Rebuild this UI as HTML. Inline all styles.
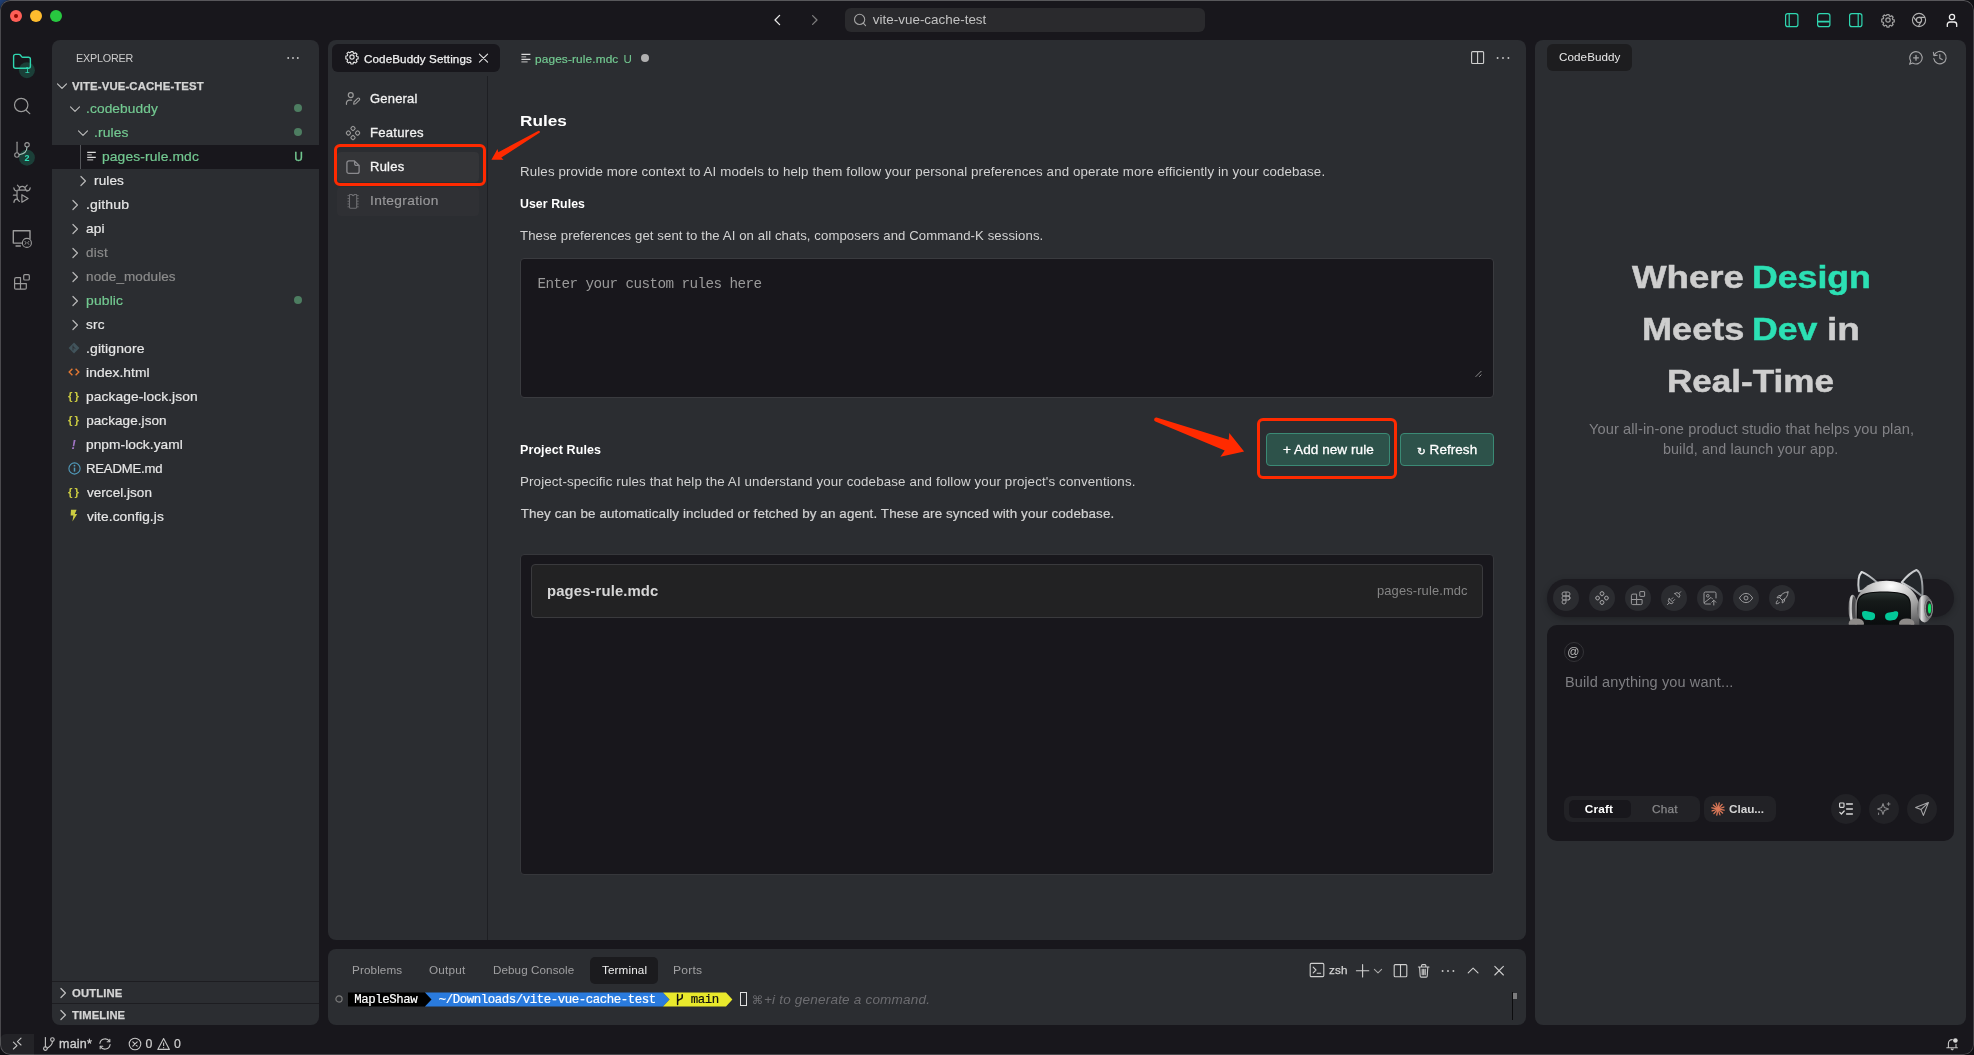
<!DOCTYPE html>
<html lang="en"><head><meta charset="utf-8"><title>CodeBuddy Settings - vite-vue-cache-test</title>
<style>
html,body{margin:0;padding:0;background:#101014;}
body{width:1974px;height:1055px;overflow:hidden;position:relative;font-family:'Liberation Sans',sans-serif;}
.a{position:absolute;box-sizing:border-box;}
.t{white-space:pre;transform-origin:0 50%;}
svg{overflow:visible;}
</style></head><body>
<div class="a" style="left:0;top:0;width:12px;height:12px;background:linear-gradient(135deg,#1f3f76 0,#16294a 60%,#101014 100%);"></div>
<div class="a" style="left:0;top:0;width:1974px;height:1055px;background:#18171c;border-radius:10px;overflow:hidden;will-change:transform;">
<div class="a" style="left:0px;top:0px;width:1974px;height:1055px;border-radius:10px;border:1px solid rgba(255,255,255,0.28);border-left-color:rgba(255,255,255,0.22);border-right-color:rgba(255,255,255,0.18);border-bottom-color:rgba(255,255,255,0.22);z-index:50;pointer-events:none;"></div>
<div class="a" style="left:10px;top:10px;width:12px;height:12px;background:#fe5f57;border-radius:6px;"></div>
<div class="a" style="left:30px;top:10px;width:12px;height:12px;background:#febc2e;border-radius:6px;"></div>
<div class="a" style="left:50px;top:10px;width:12px;height:12px;background:#28c840;border-radius:6px;"></div>
<div class="a" style="left:14px;top:14px;width:4px;height:4px;background:#8c0a00;border-radius:2px;"></div>
<svg class="a" style="left:769px;top:12px;" width="16" height="16" viewBox="0 0 16 16" fill="none"><path d="M10.6 3.4 L6 8 L10.6 12.6" stroke="#e8e8e8" stroke-width="1.3" stroke-linecap="round" stroke-linejoin="round"/></svg>
<svg class="a" style="left:807px;top:12px;" width="16" height="16" viewBox="0 0 16 16" fill="none"><path d="M5.6 3.6 L10 8 L5.6 12.4" stroke="#7d7d7d" stroke-width="1.3" stroke-linecap="round" stroke-linejoin="round"/></svg>
<div class="a" style="left:845px;top:8px;width:360px;height:24px;background:#2a2a2d;border-radius:6px;"></div>
<svg class="a" style="left:852px;top:12px;" width="16" height="16" viewBox="0 0 16 16" fill="none"><circle cx="7.6" cy="7.4" r="5.1" stroke="#a4a4a4" stroke-width="1.1"/><path d="M11.3 11.2 L13.6 13.6" stroke="#a4a4a4" stroke-width="1.1" stroke-linecap="round"/></svg>
<span class="a t" style="left:872.87px;top:11.00px;line-height:17px;font-size:13.4px;color:#c2c2c2;letter-spacing:0.017px;">vite-vue-cache-test</span>
<svg class="a" style="left:1785px;top:13px;" width="14" height="15" viewBox="0 0 14 15" fill="none"><rect x="0.6" y="0.6" width="12.3" height="13" rx="2.2" stroke="#2fd6b0" stroke-width="1.2"/><path d="M4.2 0.8 V13.4" stroke="#2fd6b0" stroke-width="1.2"/></svg>
<svg class="a" style="left:1817px;top:13px;" width="14" height="15" viewBox="0 0 14 15" fill="none"><rect x="0.6" y="0.6" width="12.3" height="13" rx="2.2" stroke="#2fd6b0" stroke-width="1.2"/><path d="M0.8 8.6 H12.8" stroke="#2fd6b0" stroke-width="1.6"/></svg>
<svg class="a" style="left:1849px;top:13px;" width="14" height="15" viewBox="0 0 14 15" fill="none"><rect x="0.6" y="0.6" width="12.3" height="13" rx="2.2" stroke="#2fd6b0" stroke-width="1.2"/><path d="M9.2 0.8 V13.4" stroke="#2fd6b0" stroke-width="1.2"/></svg>
<svg class="a" style="left:1877.7px;top:9.8px;" width="20" height="20" viewBox="0 0 20 20" fill="none"><path d="M8 5.3a2.7 2.7 0 1 0 0 5.4a2.7 2.7 0 0 0 0-5.4zM6.7 1.2h2.6l.4 1.9 1.2.6 1.7-1 1.8 1.8-1 1.7.5 1.2 1.9.4v2.6l-1.9.4-.5 1.2 1 1.7-1.8 1.8-1.7-1-1.2.5-.4 1.9H6.7l-.4-1.9-1.2-.5-1.7 1-1.8-1.8 1-1.7-.5-1.2-1.9-.4V6.8l1.9-.4.5-1.2-1-1.7 1.8-1.8 1.7 1 1.2-.6z" stroke="#a0a0a0" stroke-width="1.56" stroke-linejoin="round" transform="translate(10,10) scale(0.801) translate(-8,-8)"/></svg>
<svg class="a" style="left:1911px;top:12px;" width="16" height="16" viewBox="0 0 16 16" fill="none"><circle cx="8" cy="8" r="6.6" stroke="#b0b0b0" stroke-width="1.1"/><circle cx="8" cy="8" r="2.6" stroke="#b0b0b0" stroke-width="1.1"/><path d="M2.3 4.8 L5.8 9.4 M8 5.4 H14 M10.2 9.4 L7.4 14.4" stroke="#b0b0b0" stroke-width="1.1"/></svg>
<svg class="a" style="left:1944px;top:12px;" width="16" height="16" viewBox="0 0 16 16" fill="none"><circle cx="8" cy="5" r="2.6" stroke="#f0f0f0" stroke-width="1.3"/><path d="M3.3 14.4 V12.6 a2.6 2.6 0 0 1 2.6-2.6 h4.2 a2.6 2.6 0 0 1 2.6 2.6 V14.4" stroke="#f0f0f0" stroke-width="1.3" stroke-linecap="round"/></svg>
<svg class="a" style="left:0px;top:40px;" width="52" height="260" viewBox="0 0 52 260" fill="none"><g transform="translate(0,-40)" fill="none" stroke-linecap="round" stroke-linejoin="round">
<circle cx="26.9" cy="70.2" r="8" fill="#1b3f38"/>
<path d="M15.6 54.4 h3.4 a1.6 1.6 0 0 1 1.3 0.6 l1.5 1.9 a1 1 0 0 0 0.8 0.4 h5.8 a2 2 0 0 1 2 2 v7 a2 2 0 0 1 -2 2 h-12.8 a2 2 0 0 1 -2 -2 v-9.9 a2 2 0 0 1 2 -2 z" stroke="#2fd6b0" stroke-width="1.4"/>
<circle cx="21.2" cy="105" r="6.7" stroke="#9a9a9a" stroke-width="1.2"/><path d="M26.1 110.2 L29.8 113.6" stroke="#9a9a9a" stroke-width="1.2"/>
<circle cx="26.9" cy="157.7" r="8" fill="#1b3f38"/>
<path d="M17.05 142.2 V152.2" stroke="#9a9a9a" stroke-width="1.2"/>
<circle cx="27.05" cy="144.8" r="2.2" stroke="#9a9a9a" stroke-width="1.1"/>
<circle cx="16.9" cy="155" r="2.2" stroke="#9a9a9a" stroke-width="1.1"/>
<path d="M27 147.1 C27 151.6 23.4 154.2 19.2 154.8" stroke="#a8c4bc" stroke-width="1.1"/>
<path d="M19.2 189.4 a3.1 3.1 0 0 1 6.2 0 M17.8 190.2 h9 M17.4 185.2 l2 2.2 M27.2 185.2 l-2 2.2 M13.8 187.8 c0.1 2 1.2 3.1 3.4 3.3 M30.2 187.8 c-0.1 2 -1.2 3.1 -3.4 3.3 M13.4 195.2 h3.6 M13.9 202.4 c0.1 -2 1.2 -3.1 3.2 -3.5 M17 191.2 v5.6 c0 2 0.9 3.6 2.4 4.6" stroke="#9a9a9a" stroke-width="1.2"/>
<path d="M21.9 194.7 L28.1 198.5 L21.9 202.3 Z" stroke="#9a9a9a" stroke-width="1.2"/>
<path d="M21.6 243.1 H13.3 V230.8 H30 V238.4" stroke="#9a9a9a" stroke-width="1.4"/>
<path d="M16 246 H20.4" stroke="#9a9a9a" stroke-width="1.3"/>
<circle cx="26.9" cy="242.9" r="4.5" stroke="#9a9a9a" stroke-width="1.1"/>
<path d="M25 241.4 l1.2 1.5 l-1.2 1.5 M28.8 241.4 l-1.2 1.5 l1.2 1.5" stroke="#9a9a9a" stroke-width="0.9"/>
<path d="M14.6 279.4 a1.7 1.7 0 0 1 1.7 -1.7 h4.2 v5.9 h5.8 v4.3 a1.2 1.2 0 0 1 -1.2 1.2 h-9.3 a1.2 1.2 0 0 1 -1.2 -1.2 z M20.5 283.6 v5.4 M14.6 283.6 h5.9" stroke="#9a9a9a" stroke-width="1.2"/>
<rect x="23.7" y="274.7" width="5.6" height="5.3" rx="1" stroke="#9a9a9a" stroke-width="1.2"/>
</g></svg>
<span class="a t" style="left:24.40px;top:152.00px;line-height:12px;font-size:9px;color:#2fe0b8;font-weight:700;">2</span>
<span class="a t" style="left:24.74px;top:64.00px;line-height:12px;font-size:9px;color:#2fd6b0;">1</span>
<div class="a" style="left:52px;top:40px;width:267px;height:985px;background:#2b2d31;border-radius:8px;"></div>
<span class="a t" style="left:75.77px;top:51.00px;line-height:15px;font-size:11.2px;color:#cccccc;letter-spacing:-0.186px;transform:scaleX(0.9618);">EXPLORER</span>
<svg class="a" style="left:286px;top:54px;" width="14" height="8" viewBox="0 0 14 8" fill="none"><circle cx="2.2" cy="4" r="0.95" fill="#c8c8c8"/><circle cx="7" cy="4" r="0.95" fill="#c8c8c8"/><circle cx="11.8" cy="4" r="0.95" fill="#c8c8c8"/></svg>
<svg class="a" style="left:54px;top:78px;" width="16" height="16" viewBox="0 0 16 16" fill="none"><path d="M3.5 5.95 L8 10.45 L12.5 5.95" stroke="#c0c0c0" stroke-width="1.2" stroke-linecap="round" stroke-linejoin="round"/></svg>
<span class="a t" style="left:72.18px;top:79.00px;line-height:15px;font-size:11.2px;color:#d4d4d4;font-weight:700;letter-spacing:0.114px;transform:scaleX(1.0175);-webkit-text-stroke:0.25px #d4d4d4;">VITE-VUE-CACHE-TEST</span>
<div class="a" style="left:52px;top:145px;width:267px;height:24px;background:#18171c;"></div>
<div class="a" style="left:80px;top:145px;width:1px;height:24px;background:#55565a;"></div>
<span class="a t" style="left:85.61px;top:100.00px;line-height:18px;font-size:13.5px;color:#73c991;letter-spacing:0.104px;transform:scaleX(1.0168);-webkit-text-stroke:0.2px #73c991;">.codebuddy</span>
<svg class="a" style="left:66.5px;top:100.5px;" width="16" height="16" viewBox="0 0 16 16" fill="none"><path d="M3.5 5.95 L8 10.45 L12.5 5.95" stroke="#b8b8b8" stroke-width="1.2" stroke-linecap="round" stroke-linejoin="round"/></svg>
<span class="a t" style="left:93.60px;top:124.00px;line-height:18px;font-size:13.5px;color:#73c991;letter-spacing:0.098px;transform:scaleX(1.0283);-webkit-text-stroke:0.2px #73c991;">.rules</span>
<svg class="a" style="left:74.5px;top:124.5px;" width="16" height="16" viewBox="0 0 16 16" fill="none"><path d="M3.5 5.95 L8 10.45 L12.5 5.95" stroke="#b8b8b8" stroke-width="1.2" stroke-linecap="round" stroke-linejoin="round"/></svg>
<span class="a t" style="left:101.87px;top:148.00px;line-height:18px;font-size:13.5px;color:#73c991;letter-spacing:0.115px;transform:scaleX(1.0240);-webkit-text-stroke:0.2px #73c991;">pages-rule.mdc</span>
<svg class="a" style="left:87.3px;top:151.1px;" width="10" height="12" viewBox="0 0 10 12" fill="none"><path d="M0.2 1.3 H8.8 M0.2 6.4 H8.8" stroke="#dcdcdc" stroke-width="1.25"/><path d="M0.2 3.85 H4.8 M0.2 8.95 H6.2" stroke="#a4a4a4" stroke-width="1.25"/></svg>
<span class="a t" style="left:94.06px;top:172.00px;line-height:18px;font-size:13.5px;color:#e6e6e6;letter-spacing:0.118px;transform:scaleX(1.0038);-webkit-text-stroke:0.2px #e6e6e6;">rules</span>
<svg class="a" style="left:74.5px;top:172.5px;" width="16" height="16" viewBox="0 0 16 16" fill="none"><path d="M5.95 3.5 L10.45 8 L5.95 12.5" stroke="#b8b8b8" stroke-width="1.2" stroke-linecap="round" stroke-linejoin="round"/></svg>
<span class="a t" style="left:85.59px;top:196.00px;line-height:18px;font-size:13.5px;color:#e6e6e6;letter-spacing:0.141px;transform:scaleX(1.0402);-webkit-text-stroke:0.2px #e6e6e6;">.github</span>
<svg class="a" style="left:66.5px;top:196.5px;" width="16" height="16" viewBox="0 0 16 16" fill="none"><path d="M5.95 3.5 L10.45 8 L5.95 12.5" stroke="#b8b8b8" stroke-width="1.2" stroke-linecap="round" stroke-linejoin="round"/></svg>
<span class="a t" style="left:86.32px;top:220.00px;line-height:18px;font-size:13.5px;color:#e6e6e6;letter-spacing:0.208px;transform:scaleX(1.0111);-webkit-text-stroke:0.2px #e6e6e6;">api</span>
<svg class="a" style="left:66.5px;top:220.5px;" width="16" height="16" viewBox="0 0 16 16" fill="none"><path d="M5.95 3.5 L10.45 8 L5.95 12.5" stroke="#b8b8b8" stroke-width="1.2" stroke-linecap="round" stroke-linejoin="round"/></svg>
<span class="a t" style="left:86.36px;top:244.00px;line-height:18px;font-size:13.5px;color:#8b8b8b;letter-spacing:0.244px;transform:scaleX(0.9959);-webkit-text-stroke:0.2px #8b8b8b;">dist</span>
<svg class="a" style="left:66.5px;top:244.5px;" width="16" height="16" viewBox="0 0 16 16" fill="none"><path d="M5.95 3.5 L10.45 8 L5.95 12.5" stroke="#b8b8b8" stroke-width="1.2" stroke-linecap="round" stroke-linejoin="round"/></svg>
<span class="a t" style="left:86.05px;top:268.00px;line-height:18px;font-size:13.5px;color:#8b8b8b;letter-spacing:0.088px;-webkit-text-stroke:0.2px #8b8b8b;">node_modules</span>
<svg class="a" style="left:66.5px;top:268.5px;" width="16" height="16" viewBox="0 0 16 16" fill="none"><path d="M5.95 3.5 L10.45 8 L5.95 12.5" stroke="#b8b8b8" stroke-width="1.2" stroke-linecap="round" stroke-linejoin="round"/></svg>
<span class="a t" style="left:86.06px;top:292.00px;line-height:18px;font-size:13.5px;color:#73c991;letter-spacing:0.159px;transform:scaleX(1.0272);-webkit-text-stroke:0.2px #73c991;">public</span>
<svg class="a" style="left:66.5px;top:292.5px;" width="16" height="16" viewBox="0 0 16 16" fill="none"><path d="M5.95 3.5 L10.45 8 L5.95 12.5" stroke="#b8b8b8" stroke-width="1.2" stroke-linecap="round" stroke-linejoin="round"/></svg>
<span class="a t" style="left:86.38px;top:316.00px;line-height:18px;font-size:13.5px;color:#e6e6e6;letter-spacing:0.273px;transform:scaleX(1.0026);-webkit-text-stroke:0.2px #e6e6e6;">src</span>
<svg class="a" style="left:66.5px;top:316.5px;" width="16" height="16" viewBox="0 0 16 16" fill="none"><path d="M5.95 3.5 L10.45 8 L5.95 12.5" stroke="#b8b8b8" stroke-width="1.2" stroke-linecap="round" stroke-linejoin="round"/></svg>
<span class="a t" style="left:85.70px;top:340.00px;line-height:18px;font-size:13.5px;color:#e6e6e6;letter-spacing:0.113px;transform:scaleX(1.0352);-webkit-text-stroke:0.2px #e6e6e6;">.gitignore</span>
<svg class="a" style="left:68px;top:342px;" width="12" height="12" viewBox="0 0 12 12" fill="none"><path d="M6 0.6 L11.4 6 L6 11.4 L0.6 6 Z" fill="#41535b"/><path d="M5 3.6 V8.4 M5 5 L7.4 6.6" stroke="#2b2d31" stroke-width="0.9"/></svg>
<span class="a t" style="left:86.15px;top:364.00px;line-height:18px;font-size:13.5px;color:#e6e6e6;letter-spacing:0.081px;transform:scaleX(1.0224);-webkit-text-stroke:0.2px #e6e6e6;">index.html</span>
<svg class="a" style="left:68px;top:366px;" width="12" height="12" viewBox="0 0 12 12" fill="none"><path d="M4.4 2.8 L1.2 6 L4.4 9.2 M7.6 2.8 L10.8 6 L7.6 9.2" stroke="#e37933" stroke-width="1.4" /></svg>
<span class="a t" style="left:86.18px;top:388.00px;line-height:18px;font-size:13.5px;color:#e6e6e6;letter-spacing:0.087px;transform:scaleX(1.0197);-webkit-text-stroke:0.2px #e6e6e6;">package-lock.json</span>
<span class="a t" style="left:68.12px;top:389.00px;line-height:15px;font-size:11.5px;color:#cbcb41;font-weight:700;letter-spacing:1.8px;">{}</span>
<span class="a t" style="left:86.19px;top:412.00px;line-height:18px;font-size:13.5px;color:#e6e6e6;letter-spacing:0.073px;-webkit-text-stroke:0.2px #e6e6e6;">package.json</span>
<span class="a t" style="left:68.12px;top:413.00px;line-height:15px;font-size:11.5px;color:#cbcb41;font-weight:700;letter-spacing:1.8px;">{}</span>
<span class="a t" style="left:86.18px;top:436.00px;line-height:18px;font-size:13.5px;color:#e6e6e6;letter-spacing:0.072px;transform:scaleX(1.0133);-webkit-text-stroke:0.2px #e6e6e6;">pnpm-lock.yaml</span>
<span class="a t" style="left:71.51px;top:436.00px;line-height:17px;font-size:13px;color:#a074c4;font-weight:700;font-style:italic;">!</span>
<span class="a t" style="left:85.80px;top:460.00px;line-height:18px;font-size:13.5px;color:#e6e6e6;letter-spacing:-0.167px;transform:scaleX(0.9700);-webkit-text-stroke:0.2px #e6e6e6;">README.md</span>
<svg class="a" style="left:67.5px;top:461.5px;" width="13" height="13" viewBox="0 0 13 13" fill="none"><circle cx="6.5" cy="6.5" r="5.6" stroke="#519aba" stroke-width="1.1"/><path d="M6.5 5.6 V9.6" stroke="#519aba" stroke-width="1.5"/><circle cx="6.5" cy="3.7" r="0.9" fill="#519aba"/></svg>
<span class="a t" style="left:86.73px;top:484.00px;line-height:18px;font-size:13.5px;color:#e6e6e6;letter-spacing:0.053px;transform:scaleX(0.9976);-webkit-text-stroke:0.2px #e6e6e6;">vercel.json</span>
<span class="a t" style="left:68.12px;top:485.00px;line-height:15px;font-size:11.5px;color:#cbcb41;font-weight:700;letter-spacing:1.8px;">{}</span>
<span class="a t" style="left:86.73px;top:508.00px;line-height:18px;font-size:13.5px;color:#e6e6e6;letter-spacing:0.098px;transform:scaleX(1.0162);-webkit-text-stroke:0.2px #e6e6e6;">vite.config.js</span>
<svg class="a" style="left:69px;top:509px;" width="10" height="13" viewBox="0 0 10 13" fill="none"><path d="M2 0.8 H7.6 L5.8 5 H8.2 L3.4 12.4 L4.4 6.6 H1.6 Z" fill="#cbcb41"/></svg>
<div class="a" style="left:294px;top:104px;width:8px;height:8px;background:#4d7d61;border-radius:4px;"></div>
<div class="a" style="left:294px;top:128px;width:8px;height:8px;background:#4d7d61;border-radius:4px;"></div>
<div class="a" style="left:294px;top:296px;width:8px;height:8px;background:#4d7d61;border-radius:4px;"></div>
<span class="a t" style="left:294.23px;top:149.00px;line-height:16px;font-size:12px;color:#73c991;-webkit-text-stroke:0.35px #73c991;">U</span>
<div class="a" style="left:52px;top:981px;width:267px;height:1px;background:#1d1d21;"></div>
<div class="a" style="left:52px;top:1003px;width:267px;height:1px;background:#1d1d21;"></div>
<svg class="a" style="left:54.5px;top:985.2px;" width="16" height="16" viewBox="0 0 16 16" fill="none"><path d="M5.95 3.5 L10.45 8 L5.95 12.5" stroke="#c0c0c0" stroke-width="1.2" stroke-linecap="round" stroke-linejoin="round"/></svg>
<span class="a t" style="left:71.94px;top:986.00px;line-height:15px;font-size:11.2px;color:#d4d4d4;font-weight:700;letter-spacing:0.122px;transform:scaleX(1.0112);-webkit-text-stroke:0.25px #d4d4d4;">OUTLINE</span>
<svg class="a" style="left:54.5px;top:1007.2px;" width="16" height="16" viewBox="0 0 16 16" fill="none"><path d="M5.95 3.5 L10.45 8 L5.95 12.5" stroke="#c0c0c0" stroke-width="1.2" stroke-linecap="round" stroke-linejoin="round"/></svg>
<span class="a t" style="left:72.20px;top:1008.00px;line-height:15px;font-size:11.2px;color:#d4d4d4;font-weight:700;letter-spacing:0.104px;transform:scaleX(1.0029);-webkit-text-stroke:0.25px #d4d4d4;">TIMELINE</span>
<div class="a" style="left:328px;top:40px;width:1198px;height:900px;background:#2b2d31;border-radius:8px;"></div>
<div class="a" style="left:332px;top:44px;width:168px;height:28px;background:#18171c;border-radius:6px;"></div>
<svg class="a" style="left:341.6px;top:47.0px;" width="20" height="20" viewBox="0 0 20 20" fill="none"><path d="M8 5.3a2.7 2.7 0 1 0 0 5.4a2.7 2.7 0 0 0 0-5.4zM6.7 1.2h2.6l.4 1.9 1.2.6 1.7-1 1.8 1.8-1 1.7.5 1.2 1.9.4v2.6l-1.9.4-.5 1.2 1 1.7-1.8 1.8-1.7-1-1.2.5-.4 1.9H6.7l-.4-1.9-1.2-.5-1.7 1-1.8-1.8 1-1.7-.5-1.2-1.9-.4V6.8l1.9-.4.5-1.2-1-1.7 1.8-1.8 1.7 1 1.2-.6z" stroke="#e4e4e4" stroke-width="1.46" stroke-linejoin="round" transform="translate(10,10) scale(0.788) translate(-8,-8)"/></svg>
<span class="a t" style="left:363.96px;top:52.00px;line-height:15px;font-size:11.4px;color:#f2f2f2;letter-spacing:0.092px;transform:scaleX(1.0227);-webkit-text-stroke:0.25px #f2f2f2;">CodeBuddy Settings</span>
<svg class="a" style="left:476px;top:50px;" width="16" height="16" viewBox="0 0 16 16" fill="none"><path d="M3.4 4.2 L11.6 12.2 M11.6 4.2 L3.4 12.2" stroke="#e6e6e6" stroke-width="1.1" stroke-linecap="round"/></svg>
<svg class="a" style="left:520.5px;top:52px;" width="10" height="12" viewBox="0 0 10 12" fill="none"><path d="M0.4 2.4 H9.4 M0.4 7.4 H9.4" stroke="#dcdcdc" stroke-width="1.3"/><path d="M0.4 4.9 H5.2 M0.4 9.9 H6.6" stroke="#a8a8a8" stroke-width="1.3"/></svg>
<span class="a t" style="left:535.30px;top:52.00px;line-height:15px;font-size:11.5px;color:#73c991;letter-spacing:0.123px;transform:scaleX(1.0298);-webkit-text-stroke:0.2px #73c991;">pages-rule.mdc</span>
<span class="a t" style="left:623.47px;top:52.00px;line-height:15px;font-size:11.5px;color:#73c991;">U</span>
<div class="a" style="left:640.5px;top:53.9px;width:8.2px;height:8.2px;background:#b0b0b0;border-radius:4.1px;"></div>
<svg class="a" style="left:1470px;top:50px;" width="16" height="16" viewBox="0 0 16 16" fill="none"><rect x="1.6" y="1.6" width="12" height="11.9" rx="1" stroke="#d0d0d0" stroke-width="1.1"/><path d="M7.6 1.6 V13.5" stroke="#d0d0d0" stroke-width="1.1"/></svg>
<svg class="a" style="left:1496px;top:54px;" width="14" height="8" viewBox="0 0 14 8" fill="none"><circle cx="1.6" cy="4" r="0.95" fill="#c8c8c8"/><circle cx="7" cy="4" r="0.95" fill="#c8c8c8"/><circle cx="12.4" cy="4" r="0.95" fill="#c8c8c8"/></svg>
<div class="a" style="left:487px;top:76px;width:1px;height:864px;background:#1e1f23;"></div>
<svg class="a" style="left:345.3px;top:91.2px;" width="18" height="18" viewBox="0 0 18 18" fill="none"><g transform="scale(0.9)"><circle cx="6.4" cy="4.6" r="2.7" stroke="#9a9a9a" stroke-width="1.35"/><path d="M1.6 14.8 v-1.4 a3.2 3.2 0 0 1 3.2-3.2 h2.6" stroke="#9a9a9a" stroke-width="1.35" stroke-linecap="round"/><path d="M9.6 14.6 l0.4-2.4 4-4 a1.3 1.3 0 0 1 1.9 1.9 l-4 4 z" stroke="#9a9a9a" stroke-width="1.25" stroke-linejoin="round"/></g></svg>
<span class="a t" style="left:369.96px;top:91.00px;line-height:16px;font-size:12.4px;color:#f0f0f0;letter-spacing:0.216px;transform:scaleX(1.0452);-webkit-text-stroke:0.3px #f0f0f0;">General</span>
<svg class="a" style="left:345.1px;top:125px;" width="16" height="16" viewBox="0 0 16 16" fill="none"><rect x="6.2" y="1.5999999999999999" width="3.6" height="3.6" rx="1.1" transform="rotate(45 8 3.4)" stroke="#9a9a9a" stroke-width="1.1"/><rect x="1.5999999999999999" y="6.2" width="3.6" height="3.6" rx="1.1" transform="rotate(45 3.4 8)" stroke="#9a9a9a" stroke-width="1.1"/><rect x="10.799999999999999" y="6.2" width="3.6" height="3.6" rx="1.1" transform="rotate(45 12.6 8)" stroke="#9a9a9a" stroke-width="1.1"/><rect x="6.2" y="10.799999999999999" width="3.6" height="3.6" rx="1.1" transform="rotate(45 8 12.6)" stroke="#9a9a9a" stroke-width="1.1"/></svg>
<span class="a t" style="left:369.73px;top:125.00px;line-height:16px;font-size:12.4px;color:#f0f0f0;letter-spacing:0.239px;transform:scaleX(1.0591);-webkit-text-stroke:0.3px #f0f0f0;">Features</span>
<div class="a" style="left:337px;top:152px;width:142px;height:30px;background:#343538;border-radius:4px;"></div>
<svg class="a" style="left:345px;top:159px;" width="16" height="16" viewBox="0 0 16 16" fill="none"><path d="M3.9 1.9 h5.6 l4.6 4.6 v5.9 a2 2 0 0 1 -2 2 h-8.2 a2 2 0 0 1 -2 -2 v-8.5 a2 2 0 0 1 2 -2 z M9.6 2.2 v2.6 a1.6 1.6 0 0 0 1.6 1.6 h2.6" stroke="#8a8a8e" stroke-width="1.3" stroke-linejoin="round"/></svg>
<span class="a t" style="left:369.75px;top:159.00px;line-height:16px;font-size:12.4px;color:#f4f4f4;letter-spacing:0.241px;transform:scaleX(1.0475);-webkit-text-stroke:0.3px #f4f4f4;">Rules</span>
<div class="a" style="left:337px;top:187.4px;width:142px;height:28.4px;background:#2f3034;border-radius:4px;"></div>
<svg class="a" style="left:345px;top:192px;" width="16" height="18" viewBox="0 0 16 18" fill="none"><path d="M5.1 2.5 h1.9 a1.1 1.1 0 0 0 2.2 0 h1.9 a0.6 0.6 0 0 1 0.6 0.6 v12.2 a0.9 0.9 0 0 1 -0.9 0.9 h-5.4 a0.9 0.9 0 0 1 -0.9 -0.9 v-12.2 a0.6 0.6 0 0 1 0.6 -0.6 z" stroke="#6e6e72" stroke-width="1.1"/><path d="M4.5 3.6 h-2 M4.5 6.4 h-2 M4.5 9.2 h-2 M4.5 12 h-2 M4.5 14.8 h-2 M11.7 3.6 h2 M11.7 6.4 h2 M11.7 9.2 h2 M11.7 12 h2 M11.7 14.8 h2" stroke="#6e6e72" stroke-width="0.9"/></svg>
<span class="a t" style="left:369.50px;top:193.00px;line-height:16px;font-size:12.4px;color:#98989a;letter-spacing:0.311px;transform:scaleX(1.1093);-webkit-text-stroke:0.15px #98989a;">Integration</span>
<div class="a" style="left:333.7px;top:143.7px;width:151.9px;height:42.7px;border-radius:6px;border:3.2px solid #ff2a00;"></div>
<span class="a t" style="left:519.66px;top:111.00px;line-height:20px;font-size:15.5px;color:#ffffff;font-weight:700;transform:scaleX(1.1089);">Rules</span>
<svg class="a" style="left:480px;top:120px;" width="80" height="50" viewBox="0 0 80 50" fill="none"><path d="M58.1 11.0 L18.3 32.3 L17.5 28.9 L11.4 39.7 L23.5 39.8 L21.3 37.6 L59.5 12.7 A1 1 0 0 0 58.1 11.0 Z" fill="#ff2a00"/></svg>
<span class="a t" style="left:519.60px;top:163.00px;line-height:17px;font-size:12.8px;color:#d2d2d2;letter-spacing:0.120px;transform:scaleX(1.0405);">Rules provide more context to AI models to help them follow your personal preferences and operate more efficiently in your codebase.</span>
<span class="a t" style="left:519.95px;top:196.00px;line-height:16px;font-size:12.2px;color:#ffffff;font-weight:700;letter-spacing:0.065px;transform:scaleX(1.0104);">User Rules</span>
<span class="a t" style="left:520.22px;top:227.00px;line-height:17px;font-size:12.8px;color:#d2d2d2;letter-spacing:0.089px;transform:scaleX(1.0282);">These preferences get sent to the AI on all chats, composers and Command-K sessions.</span>
<div class="a" style="left:520px;top:258px;width:974px;height:139.5px;background:#18171c;border-radius:4px;border:1px solid #3a3b3f;"></div>
<span class="a t" style="left:537.58px;top:275.00px;line-height:19px;font-size:14.3px;color:#9a9a9a;font-family:'Liberation Mono',monospace;letter-spacing:-0.580px;">Enter your custom rules here</span>
<svg class="a" style="left:1474px;top:369px;" width="10" height="10" viewBox="0 0 10 10" fill="none"><path d="M7.4 2 L1.6 7.8 M7.4 5.6 L5.2 7.8" stroke="#9a9a9a" stroke-width="0.9"/></svg>
<span class="a t" style="left:519.94px;top:442.00px;line-height:16px;font-size:12.2px;color:#ffffff;font-weight:700;letter-spacing:0.088px;transform:scaleX(1.0257);">Project Rules</span>
<span class="a t" style="left:519.70px;top:473.00px;line-height:17px;font-size:12.8px;color:#d2d2d2;letter-spacing:0.122px;transform:scaleX(1.0424);">Project-specific rules that help the AI understand your codebase and follow your project&#x27;s conventions.</span>
<span class="a t" style="left:520.68px;top:505.00px;line-height:17px;font-size:13.4px;color:#d2d2d2;letter-spacing:0.116px;-webkit-text-stroke:0.2px #d2d2d2;">They can be automatically included or fetched by an agent. These are synced with your codebase.</span>
<svg class="a" style="left:1140px;top:405px;" width="120" height="65" viewBox="0 0 120 65" fill="none"><path d="M16.6 12.6 L88.7 34.8 L89.3 28.0 L104.1 46.5 L80.4 51.8 L84.7 45.6 L15.4 16.6 A2.1 2.1 0 0 1 16.6 12.6 Z" fill="#ff2a00"/></svg>
<div class="a" style="left:1257.3px;top:418.2px;width:139.9px;height:61px;border-radius:6px;border:3.1px solid #ff2a00;"></div>
<div class="a" style="left:1266px;top:433px;width:124px;height:33px;background:#2d524a;border-radius:4px;border:1px solid #3b8a75;"></div>
<span class="a t" style="left:1282.83px;top:441.00px;line-height:18px;font-size:13.5px;color:#ffffff;letter-spacing:0.054px;transform:scaleX(1.0048);-webkit-text-stroke:0.3px #ffffff;">+ Add new rule</span>
<div class="a" style="left:1400px;top:433px;width:94px;height:33px;background:#2d524a;border-radius:4px;border:1px solid #3b8a75;"></div>
<span class="a t" style="left:1417.01px;top:444.00px;line-height:14px;font-size:10.5px;color:#ffffff;font-family:'Liberation Sans','DejaVu Sans',sans-serif;-webkit-text-stroke:0.35px #ffffff;">↻</span>
<span class="a t" style="left:1429.60px;top:441.00px;line-height:18px;font-size:13.5px;color:#ffffff;letter-spacing:0.046px;-webkit-text-stroke:0.3px #ffffff;">Refresh</span>
<div class="a" style="left:520px;top:553.5px;width:974px;height:321px;background:#18171c;border-radius:4px;border:1px solid #36373b;"></div>
<div class="a" style="left:531px;top:564px;width:952px;height:53.6px;background:#222223;border-radius:4px;border:1px solid #3a3a3d;"></div>
<span class="a t" style="left:546.60px;top:582.00px;line-height:19px;font-size:14.5px;color:#d6d6d6;font-weight:700;letter-spacing:0.108px;transform:scaleX(1.0249);">pages-rule.mdc</span>
<span class="a t" style="left:1376.91px;top:583.00px;line-height:16px;font-size:12.5px;color:#858585;letter-spacing:0.114px;transform:scaleX(1.0330);">pages-rule.mdc</span>
<div class="a" style="left:328px;top:949px;width:1198px;height:76px;background:#2b2d31;border-radius:8px;"></div>
<span class="a t" style="left:351.50px;top:963.00px;line-height:15px;font-size:11.4px;color:#a0a0a2;letter-spacing:0.100px;transform:scaleX(1.0278);">Problems</span>
<span class="a t" style="left:429.19px;top:963.00px;line-height:15px;font-size:11.4px;color:#a0a0a2;letter-spacing:0.185px;transform:scaleX(1.0289);">Output</span>
<span class="a t" style="left:492.80px;top:963.00px;line-height:15px;font-size:11.4px;color:#a0a0a2;letter-spacing:0.078px;transform:scaleX(1.0228);">Debug Console</span>
<div class="a" style="left:590px;top:957px;width:68.3px;height:27px;background:#1b1b1e;border-radius:5px;"></div>
<span class="a t" style="left:601.77px;top:963.00px;line-height:15px;font-size:11.4px;color:#f0f0f0;letter-spacing:0.122px;transform:scaleX(1.0263);">Terminal</span>
<span class="a t" style="left:673.40px;top:963.00px;line-height:15px;font-size:11.4px;color:#a0a0a2;letter-spacing:0.205px;transform:scaleX(1.0608);">Ports</span>
<svg class="a" style="left:1309px;top:962px;" width="16" height="16" viewBox="0 0 16 16" fill="none"><rect x="1.2" y="1.4" width="13.6" height="13.2" rx="1.2" stroke="#cfcfcf" stroke-width="1.1"/><path d="M4.2 5.2 L7 8 L4.2 10.8 M8.2 11.2 H11.6" stroke="#cfcfcf" stroke-width="1.1" stroke-linecap="round" stroke-linejoin="round"/></svg>
<span class="a t" style="left:1328.66px;top:962.00px;line-height:15px;font-size:11.6px;color:#d4d4d4;letter-spacing:0.211px;transform:scaleX(1.0079);-webkit-text-stroke:0.25px #d4d4d4;">zsh</span>
<svg class="a" style="left:1355px;top:963px;" width="16" height="16" viewBox="0 0 16 16" fill="none"><path d="M7.6 1.6 V14 M1.4 7.8 H13.8" stroke="#cfcfcf" stroke-width="1.1" stroke-linecap="round"/></svg>
<svg class="a" style="left:1370px;top:963px;" width="16" height="16" viewBox="0 0 16 16" fill="none"><path d="M4.4 6.4 L8 9.8 L11.6 6.4" stroke="#a8a8a8" stroke-width="1.1" stroke-linecap="round" stroke-linejoin="round"/></svg>
<svg class="a" style="left:1393px;top:963px;" width="16" height="16" viewBox="0 0 16 16" fill="none"><rect x="1.2" y="1.6" width="12.6" height="12.2" rx="1" stroke="#cfcfcf" stroke-width="1.1"/><path d="M7.5 1.6 V13.8" stroke="#cfcfcf" stroke-width="1.1"/></svg>
<svg class="a" style="left:1416px;top:963px;" width="16" height="16" viewBox="0 0 16 16" fill="none"><path d="M2.4 4 H13 M5.6 3.8 V2.4 a0.8 0.8 0 0 1 0.8-0.8 h2.6 a0.8 0.8 0 0 1 0.8 0.8 V3.8 M3.6 4.2 l0.6 9 a1 1 0 0 0 1 0.9 h5 a1 1 0 0 0 1-0.9 l0.6-9 M6.2 6.4 V11.8 M7.7 6.4 V11.8 M9.2 6.4 V11.8" stroke="#cfcfcf" stroke-width="1.1" stroke-linecap="round" stroke-linejoin="round"/></svg>
<svg class="a" style="left:1441px;top:966.5px;" width="14" height="8" viewBox="0 0 14 8" fill="none"><circle cx="1.6" cy="4" r="0.95" fill="#c8c8c8"/><circle cx="7" cy="4" r="0.95" fill="#c8c8c8"/><circle cx="12.4" cy="4" r="0.95" fill="#c8c8c8"/></svg>
<svg class="a" style="left:1465px;top:963px;" width="16" height="16" viewBox="0 0 16 16" fill="none"><path d="M3.2 9.8 L8.1 5.2 L13 9.8" stroke="#cfcfcf" stroke-width="1.1" stroke-linecap="round" stroke-linejoin="round"/></svg>
<svg class="a" style="left:1491px;top:963px;" width="16" height="16" viewBox="0 0 16 16" fill="none"><path d="M3.8 3.4 L12.4 12 M12.4 3.4 L3.8 12" stroke="#cfcfcf" stroke-width="1.1" stroke-linecap="round"/></svg>
<svg class="a" style="left:334px;top:994px;" width="10" height="10" viewBox="0 0 10 10" fill="none"><circle cx="5" cy="5" r="3.1" stroke="#7a7a7a" stroke-width="1.2"/></svg>
<svg class="a" style="left:347px;top:991.5px;" width="390" height="15" viewBox="0 0 390 15" fill="none"><path d="M1 0.4 H78 L84.6 7.5 L78 14.6 H1 Z" fill="#000"/><path d="M78 0.4 H316 L322.6 7.5 L316 14.6 H78 L84.6 7.5 Z" fill="#2a7bde"/><path d="M316 0.4 H379 L385.4 7.5 L379 14.6 H316 L322.6 7.5 Z" fill="#e9e92c"/></svg>
<span class="a t" style="left:354.30px;top:992.00px;line-height:16px;font-size:12.4px;color:#ffffff;font-family:'Liberation Mono',monospace;letter-spacing:-0.436px;-webkit-text-stroke:0.2px #ffffff;">MapleShaw</span>
<span class="a t" style="left:438.72px;top:992.00px;line-height:16px;font-size:12.4px;color:#ffffff;font-family:'Liberation Mono',monospace;letter-spacing:-0.436px;-webkit-text-stroke:0.2px #ffffff;">~/Downloads/vite-vue-cache-test</span>
<svg class="a" style="left:675px;top:992.5px;" width="10" height="13" viewBox="0 0 10 13" fill="none"><path d="M2.6 1.6 V11.6 M7.2 1.8 V4.4 C7.2 6.6 2.8 6.2 2.6 8.6" stroke="#111" stroke-width="1.5" stroke-linecap="round"/></svg>
<span class="a t" style="left:690.82px;top:992.00px;line-height:16px;font-size:12.4px;color:#111111;font-family:'Liberation Mono',monospace;letter-spacing:-0.438px;-webkit-text-stroke:0.2px #111111;">main</span>
<div class="a" style="left:740.2px;top:992.4px;width:6.6px;height:13.6px;border:1px solid #e0e0e0;"></div>
<span class="a t" style="left:763.71px;top:991.00px;line-height:17px;font-size:12.8px;color:#6c6c70;font-style:italic;letter-spacing:0.174px;transform:scaleX(1.0586);">+i to generate a command.</span>
<span class="a t" style="left:751.64px;top:993.00px;line-height:15px;font-size:11.5px;color:#6c6c70;font-family:'Liberation Sans','DejaVu Sans',sans-serif;">⌘</span>
<div class="a" style="left:1512px;top:992px;width:1px;height:28px;background:#0c0c0e;"></div>
<div class="a" style="left:1513px;top:992.5px;width:4px;height:6px;background:#7c7c7e;"></div>
<div class="a" style="left:1535px;top:40px;width:431px;height:985px;background:#2b2d31;border-radius:8px;"></div>
<div class="a" style="left:1547px;top:44px;width:85.2px;height:27.2px;background:#1d1d1f;border-radius:6px;"></div>
<span class="a t" style="left:1558.66px;top:49.00px;line-height:15px;font-size:11.6px;color:#e8e8e8;letter-spacing:0.069px;transform:scaleX(1.0049);">CodeBuddy</span>
<svg class="a" style="left:1908px;top:50px;" width="16" height="16" viewBox="0 0 16 16" fill="none"><path d="M8 1.6 a6.2 6.2 0 1 1 -3.4 11.4 L1.6 14.2 L2.8 11.2 A6.2 6.2 0 0 1 8 1.6 Z" stroke="#a4a4a6" stroke-width="1.1" stroke-linejoin="round"/><path d="M8 5.4 V10.2 M5.6 7.8 H10.4" stroke="#a4a4a6" stroke-width="1.3" stroke-linecap="round"/></svg>
<svg class="a" style="left:1932px;top:50px;" width="16" height="16" viewBox="0 0 16 16" fill="none"><path d="M2.2 5.2 A6.2 6.2 0 1 1 1.8 8.6" stroke="#a4a4a6" stroke-width="1.1" stroke-linecap="round"/><path d="M1.4 2.4 L2 5.6 L5.2 5.2" stroke="#a4a4a6" stroke-width="1.1" stroke-linecap="round" stroke-linejoin="round"/><path d="M7.8 4.6 V8.2 L10.2 9.6" stroke="#a4a4a6" stroke-width="1.1" stroke-linecap="round" stroke-linejoin="round"/></svg>
<span class="a t" style="left:1631.86px;top:256.00px;line-height:42px;font-size:32px;color:#cecece;font-weight:700;transform:scaleX(1.1447);-webkit-text-stroke:0.5px #cecece;">Where</span>
<span class="a t" style="left:1752.27px;top:256.00px;line-height:42px;font-size:32px;color:#2ce0b4;font-weight:700;transform:scaleX(1.1141);-webkit-text-stroke:0.5px #2ce0b4;">Design</span>
<span class="a t" style="left:1641.86px;top:308.00px;line-height:42px;font-size:32px;color:#cecece;font-weight:700;transform:scaleX(1.1289);-webkit-text-stroke:0.5px #cecece;">Meets</span>
<span class="a t" style="left:1752.27px;top:308.00px;line-height:42px;font-size:32px;color:#2ce0b4;font-weight:700;transform:scaleX(1.1146);-webkit-text-stroke:0.5px #2ce0b4;">Dev</span>
<span class="a t" style="left:1826.60px;top:308.00px;line-height:42px;font-size:32px;color:#cecece;font-weight:700;transform:scaleX(1.1555);-webkit-text-stroke:0.5px #cecece;">in</span>
<span class="a t" style="left:1666.98px;top:360.00px;line-height:42px;font-size:32px;color:#cecece;font-weight:700;transform:scaleX(1.0957);-webkit-text-stroke:0.5px #cecece;">Real-Time</span>
<span class="a t" style="left:1588.55px;top:420.00px;line-height:19px;font-size:14.3px;color:#828286;letter-spacing:0.079px;transform:scaleX(1.0239);">Your all-in-one product studio that helps you plan,</span>
<span class="a t" style="left:1662.90px;top:440.00px;line-height:19px;font-size:14.3px;color:#828286;letter-spacing:0.140px;">build, and launch your app.</span>
<div class="a" style="left:1547px;top:579px;width:407px;height:38px;background:#1c1b20;border-radius:19px;box-shadow:0 2px 6px rgba(0,0,0,0.25);"></div>
<div class="a" style="left:1553.0px;top:585px;width:26px;height:26px;background:#2b2c30;border-radius:13px;"></div>
<svg class="a" style="left:1558.0px;top:590px;" width="16" height="16" viewBox="0 0 16 16" fill="none"><path d="M6 2 h4 a2 2 0 0 1 0 4 h-4 a2 2 0 0 1 0-4 z M6 6 h4 a2 2 0 0 1 0 4 h-4 a2 2 0 0 1 0-4 z M6 10 h2 v2 a2 2 0 1 1 -2-2 z M8 2 v8 M10 6 a2 2 0 1 1 0 4" stroke="#9a9a9c" stroke-width="1"/></svg>
<div class="a" style="left:1589.0px;top:585px;width:26px;height:26px;background:#2b2c30;border-radius:13px;"></div>
<svg class="a" style="left:1594.0px;top:590px;" width="16" height="16" viewBox="0 0 16 16" fill="none"><rect x="6.3" y="1.9" width="3.4" height="3.4" rx="1" transform="rotate(45 8 3.6)" stroke="#9a9a9c" stroke-width="1"/><rect x="1.9" y="6.3" width="3.4" height="3.4" rx="1" transform="rotate(45 3.6 8)" stroke="#9a9a9c" stroke-width="1"/><rect x="10.7" y="6.3" width="3.4" height="3.4" rx="1" transform="rotate(45 12.4 8)" stroke="#9a9a9c" stroke-width="1"/><rect x="6.3" y="10.7" width="3.4" height="3.4" rx="1" transform="rotate(45 8 12.4)" stroke="#9a9a9c" stroke-width="1"/></svg>
<div class="a" style="left:1625.0px;top:585px;width:26px;height:26px;background:#2b2c30;border-radius:13px;"></div>
<svg class="a" style="left:1630.0px;top:590px;" width="16" height="16" viewBox="0 0 16 16" fill="none"><path d="M1.4 5.7 a1.6 1.6 0 0 1 1.6 -1.6 h3.6 v5.4 h5.5 v3.8 a1.3 1.3 0 0 1 -1.3 1.3 h-8.1 a1.3 1.3 0 0 1 -1.3 -1.3 z M6.6 9.5 v5.1 M1.4 9.5 h5.2" stroke="#9a9a9c" stroke-width="1" stroke-linejoin="round"/><rect x="9.8" y="1.6" width="4.8" height="4.8" rx="0.4" stroke="#9a9a9c" stroke-width="1"/></svg>
<div class="a" style="left:1660.9px;top:585px;width:26px;height:26px;background:#2b2c30;border-radius:13px;"></div>
<svg class="a" style="left:1665.9px;top:590px;" width="16" height="16" viewBox="0 0 16 16" fill="none"><path d="M1.5 14.6 L3.2 12.9 M3.2 8.7 l4 4 a2.83 2.83 0 0 1 -4 0 a2.83 2.83 0 0 1 0 -4 z M5.5 9.1 l1.3 -1.3 M7.3 10.9 l1.3 -1.3 M8.9 3.5 l4 4 a2.83 2.83 0 0 0 0 -4 a2.83 2.83 0 0 0 -4 0 z M13 3.4 L14.7 1.7" stroke="#9a9a9c" stroke-width="1" stroke-linecap="round" stroke-linejoin="round"/></svg>
<div class="a" style="left:1696.9px;top:585px;width:26px;height:26px;background:#2b2c30;border-radius:13px;"></div>
<svg class="a" style="left:1701.9px;top:590px;" width="16" height="16" viewBox="0 0 16 16" fill="none"><path d="M8.4 14 H3.4 a1.4 1.4 0 0 1-1.4-1.4 V3.4 A1.4 1.4 0 0 1 3.4 2 h9.2 a1.4 1.4 0 0 1 1.4 1.4 V8" stroke="#9a9a9c" stroke-width="1" stroke-linecap="round"/><circle cx="5.8" cy="5.8" r="1.3" stroke="#9a9a9c" stroke-width="1"/><path d="M2.4 12.6 L9 7.4 L10.6 9 M11.8 15 V10.4 M9.8 12.2 L11.8 10.2 L13.8 12.2" stroke="#9a9a9c" stroke-width="1" stroke-linecap="round" stroke-linejoin="round"/></svg>
<div class="a" style="left:1732.9px;top:585px;width:26px;height:26px;background:#2b2c30;border-radius:13px;"></div>
<svg class="a" style="left:1737.9px;top:590px;" width="16" height="16" viewBox="0 0 16 16" fill="none"><path d="M1.4 8 C3.4 4.6 5.6 3.4 8 3.4 S12.6 4.6 14.6 8 C12.6 11.4 10.4 12.6 8 12.6 S3.4 11.4 1.4 8 Z" stroke="#9a9a9c" stroke-width="1" stroke-linejoin="round"/><circle cx="8" cy="8" r="2" stroke="#9a9a9c" stroke-width="1"/></svg>
<div class="a" style="left:1768.9px;top:585px;width:26px;height:26px;background:#2b2c30;border-radius:13px;"></div>
<svg class="a" style="left:1773.9px;top:590px;" width="16" height="16" viewBox="0 0 16 16" fill="none"><path d="M14 2 C10 2 7.4 4 5.6 7.6 L8.4 10.4 C12 8.6 14 6 14 2 Z M5.8 7.6 L3 7.8 L4.6 5.6 L7 5.4 M8.4 10.2 L8.2 13 L10.4 11.4 L10.6 9 M3.6 10.6 C2.6 11 2.2 12.4 2.2 13.8 C3.6 13.8 5 13.4 5.4 12.4" stroke="#9a9a9c" stroke-width="1" stroke-linejoin="round" stroke-linecap="round"/></svg>
<div class="a" style="left:1547px;top:625px;width:407px;height:215.6px;background:#18171c;border-radius:10px;"></div>
<div class="a" style="left:1564px;top:642px;width:20px;height:20px;border-radius:10px;border:1px solid #333337;"></div>
<span class="a t" style="left:1567.36px;top:644.00px;line-height:16px;font-size:12px;color:#b4b4b4;">@</span>
<span class="a t" style="left:1565.40px;top:673.00px;line-height:18px;font-size:14px;color:#7e7e82;letter-spacing:0.113px;transform:scaleX(1.0366);">Build anything you want...</span>
<div class="a" style="left:1564px;top:796px;width:136px;height:25.8px;background:#222226;border-radius:8px;"></div>
<div class="a" style="left:1568.8px;top:799.8px;width:62.2px;height:18.2px;background:#18171c;border-radius:5px;"></div>
<span class="a t" style="left:1584.85px;top:802.00px;line-height:15px;font-size:11.8px;color:#ffffff;font-weight:700;letter-spacing:0.127px;">Craft</span>
<span class="a t" style="left:1651.97px;top:802.00px;line-height:15px;font-size:11.8px;color:#88888a;letter-spacing:0.244px;-webkit-text-stroke:0.25px #88888a;">Chat</span>
<div class="a" style="left:1703.8px;top:796px;width:72.4px;height:25.8px;background:#222226;border-radius:8px;"></div>
<svg class="a" style="left:1711px;top:802px;" width="14" height="14" viewBox="0 0 14 14" fill="none"><path d="M7 7 L13.08 8.23" stroke="#d97757" stroke-width="1.3" stroke-linecap="round"/><path d="M7 7 L11.65 11.10" stroke="#d97757" stroke-width="1.3" stroke-linecap="round"/><path d="M7 7 L8.97 12.88" stroke="#d97757" stroke-width="1.3" stroke-linecap="round"/><path d="M7 7 L5.77 13.08" stroke="#d97757" stroke-width="1.3" stroke-linecap="round"/><path d="M7 7 L2.90 11.65" stroke="#d97757" stroke-width="1.3" stroke-linecap="round"/><path d="M7 7 L1.12 8.97" stroke="#d97757" stroke-width="1.3" stroke-linecap="round"/><path d="M7 7 L0.92 5.77" stroke="#d97757" stroke-width="1.3" stroke-linecap="round"/><path d="M7 7 L2.35 2.90" stroke="#d97757" stroke-width="1.3" stroke-linecap="round"/><path d="M7 7 L5.03 1.12" stroke="#d97757" stroke-width="1.3" stroke-linecap="round"/><path d="M7 7 L8.23 0.92" stroke="#d97757" stroke-width="1.3" stroke-linecap="round"/><path d="M7 7 L11.10 2.35" stroke="#d97757" stroke-width="1.3" stroke-linecap="round"/><path d="M7 7 L12.88 5.03" stroke="#d97757" stroke-width="1.3" stroke-linecap="round"/></svg>
<span class="a t" style="left:1728.95px;top:802.00px;line-height:15px;font-size:11.8px;color:#d4d4d4;font-weight:700;letter-spacing:-0.045px;">Clau...</span>
<div class="a" style="left:1831px;top:794px;width:30px;height:30px;background:#222226;border-radius:15px;"></div>
<div class="a" style="left:1869px;top:794px;width:30px;height:30px;background:#222226;border-radius:15px;"></div>
<div class="a" style="left:1907px;top:794px;width:30px;height:30px;background:#222226;border-radius:15px;"></div>
<svg class="a" style="left:1838px;top:801px;" width="16" height="16" viewBox="0 0 16 16" fill="none"><rect x="1.6" y="2" width="4.4" height="4.4" rx="0.8" stroke="#d8d8d8" stroke-width="1.2"/><path d="M1.8 11.4 L3.4 13 L6.2 10 M8.6 3 H14.4 M8.6 8 H14.4 M8.6 13 H14.4" stroke="#d8d8d8" stroke-width="1.3" stroke-linecap="round" stroke-linejoin="round"/></svg>
<svg class="a" style="left:1876px;top:801px;" width="16" height="16" viewBox="0 0 16 16" fill="none"><path d="M7 2.6 L8.4 6.6 L12.4 8 L8.4 9.4 L7 13.4 L5.6 9.4 L1.6 8 L5.6 6.6 Z" stroke="#8a8a8c" stroke-width="1.1" stroke-linejoin="round"/><path d="M12.6 1.6 V4.4 M11.2 3 H14 M2.6 12 V13.6" stroke="#8a8a8c" stroke-width="1" stroke-linecap="round"/></svg>
<svg class="a" style="left:1914px;top:801px;" width="16" height="16" viewBox="0 0 16 16" fill="none"><path d="M14.4 1.6 L1.6 6.4 L7 8.6 L9.4 14.4 Z M7 8.6 L14.4 1.6" stroke="#a8a8aa" stroke-width="1.1" stroke-linejoin="round"/></svg>
<svg class="a" style="left:1836px;top:562px;" width="110" height="70" viewBox="0 0 1658 1055" fill="none">
<defs>
<radialGradient id="cgD" cx="0.56" cy="0.12" r="0.95"><stop offset="0" stop-color="#ffffff"/><stop offset="0.25" stop-color="#d4d4d4"/><stop offset="0.55" stop-color="#a0a0a0"/><stop offset="1" stop-color="#4e4e50"/></radialGradient>
<linearGradient id="cgH" x1="0" y1="0" x2="1" y2="0"><stop offset="0" stop-color="#505052"/><stop offset="0.3" stop-color="#e0e0e0"/><stop offset="0.6" stop-color="#8a8a8c"/><stop offset="1" stop-color="#4a4a4c"/></linearGradient>
<linearGradient id="cgV" x1="0" y1="0" x2="0" y2="1"><stop offset="0" stop-color="#2a3230"/><stop offset="0.25" stop-color="#151a19"/><stop offset="1" stop-color="#090b0d"/></linearGradient>
<linearGradient id="cgE" x1="0" y1="0" x2="1" y2="1"><stop offset="0" stop-color="#e4e6e8"/><stop offset="1" stop-color="#84888c"/></linearGradient>
<clipPath id="cc"><rect x="0" y="0" width="1658" height="946"/></clipPath>
</defs>
<g clip-path="url(#cc)">
<path d="M346 440 C326 300 340 200 386 150 C470 186 556 252 620 310 L470 420 Z" fill="#23272b" stroke="url(#cgE)" stroke-width="30" stroke-linejoin="round"/>
<path d="M990 306 C1056 226 1136 152 1212 120 C1282 156 1312 300 1302 520 L1150 400 Z" fill="#23272b" stroke="url(#cgE)" stroke-width="30" stroke-linejoin="round"/>
<ellipse cx="252" cy="700" rx="66" ry="205" fill="url(#cgH)"/>
<ellipse cx="268" cy="700" rx="30" ry="180" fill="#4c4c4e"/>
<path d="M286 720 C286 460 470 284 760 284 C1050 284 1256 460 1256 720 L1256 970 L286 970 Z" fill="url(#cgD)"/>
<path d="M316 660 C316 500 390 446 720 446 C1050 446 1128 500 1128 660 L1128 970 L316 970 Z" fill="#050607"/>
<path d="M330 668 C330 512 400 460 720 460 C1040 460 1114 512 1114 668 L1114 970 L330 970 Z" fill="url(#cgV)"/>
<path d="M392 772 C392 742 420 734 470 744 L556 760 C590 770 596 802 586 842 C576 872 550 882 500 876 L444 870 C408 850 392 812 392 772 Z" fill="#03c898"/>
<path d="M938 772 C938 746 910 738 868 748 L780 766 C746 776 734 802 742 842 C750 872 776 884 822 880 L890 872 C922 850 938 812 938 772 Z" fill="#03c898"/>
<ellipse cx="1336" cy="704" rx="112" ry="206" fill="url(#cgH)"/>
<ellipse cx="1396" cy="702" rx="66" ry="156" fill="#6c6c6e"/>
<ellipse cx="1400" cy="702" rx="52" ry="128" fill="#2c2e30" stroke="#c8c8c8" stroke-width="8"/>
<ellipse cx="1410" cy="700" rx="24" ry="76" fill="#0ae868"/>
<ellipse cx="306" cy="926" rx="116" ry="76" fill="#8d8a88"/>
<ellipse cx="1066" cy="926" rx="116" ry="76" fill="#8d8a88"/>
</g>
</svg>
<div class="a" style="left:0px;top:1034px;width:34px;height:21px;background:#232327;border-radius:6px 0 0 0;"></div>
<svg class="a" style="left:9px;top:1036px;" width="16" height="16" viewBox="0 0 16 16" fill="none"><path d="M4.4 6.6 L8 10 L4.4 13.4 M12 2.6 L8.4 6 L12 9.4" stroke="#c4c4c4" stroke-width="1.1" stroke-linecap="round" stroke-linejoin="round" transform="translate(0,-0.4)"/></svg>
<svg class="a" style="left:42px;top:1036px;" width="14" height="16" viewBox="0 0 14 16" fill="none"><path d="M3.4 1.6 V11" stroke="#c4c4c4" stroke-width="1.1" stroke-linecap="round"/><circle cx="10.4" cy="3.6" r="1.8" stroke="#c4c4c4" stroke-width="1.1"/><circle cx="3.4" cy="12.6" r="1.8" stroke="#c4c4c4" stroke-width="1.1"/><path d="M10.4 5.6 C10.4 9.6 6.4 11.6 5 12.4" stroke="#c4c4c4" stroke-width="1.1"/></svg>
<span class="a t" style="left:59.22px;top:1036.00px;line-height:16px;font-size:12.3px;color:#d0d0d0;letter-spacing:0.196px;transform:scaleX(1.0179);-webkit-text-stroke:0.3px #d0d0d0;">main*</span>
<svg class="a" style="left:98px;top:1037px;" width="14" height="14" viewBox="0 0 14 14" fill="none"><path d="M1.9 6.4 A5.2 5.2 0 0 1 11.6 4.6 M12.1 7.6 A5.2 5.2 0 0 1 2.4 9.4" stroke="#c4c4c4" stroke-width="1.1" stroke-linecap="round"/><path d="M11.8 2.2 V4.8 H9.2 M2.2 11.8 V9.2 H4.8" stroke="#c4c4c4" stroke-width="1.1" stroke-linecap="round" stroke-linejoin="round"/></svg>
<svg class="a" style="left:128px;top:1037px;" width="14" height="14" viewBox="0 0 14 14" fill="none"><circle cx="7" cy="7" r="5.8" stroke="#c4c4c4" stroke-width="1.1"/><path d="M4.8 4.8 L9.2 9.2 M9.2 4.8 L4.8 9.2" stroke="#c4c4c4" stroke-width="1.1" stroke-linecap="round"/></svg>
<span class="a t" style="left:145.54px;top:1036.00px;line-height:16px;font-size:12.3px;color:#d0d0d0;-webkit-text-stroke:0.2px #d0d0d0;">0</span>
<svg class="a" style="left:157px;top:1037px;" width="14" height="14" viewBox="0 0 14 14" fill="none"><path d="M6.6 1.6 L12.4 12.4 H0.8 Z" stroke="#c4c4c4" stroke-width="1.1" stroke-linejoin="round"/><path d="M6.6 5.4 V9" stroke="#c4c4c4" stroke-width="1.1"/><circle cx="6.6" cy="10.7" r="0.6" fill="#c4c4c4"/></svg>
<span class="a t" style="left:173.94px;top:1036.00px;line-height:16px;font-size:12.3px;color:#d0d0d0;-webkit-text-stroke:0.2px #d0d0d0;">0</span>
<svg class="a" style="left:1945px;top:1037px;" width="14" height="14" viewBox="0 0 14 14" fill="none"><path d="M3.4 10.6 V6.4 A3.8 3.8 0 0 1 7.2 2.6 M11 7.4 V10.6 M1.8 10.8 H12.4 M6.2 12 L7.2 12.8 L8.2 12" stroke="#c4c4c4" stroke-width="1.1" stroke-linecap="round"/><circle cx="10.4" cy="3.5" r="2.3" fill="#d8d8d8"/></svg>
</div>
</body></html>
